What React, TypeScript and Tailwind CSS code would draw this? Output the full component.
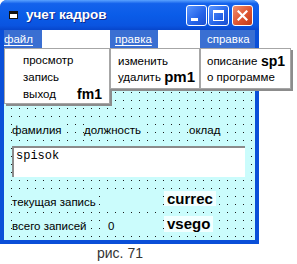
import React from "react";

const FONT = "font-['Liberation_Sans',Arial,sans-serif]";
const CYAN = "bg-[#cbfcfc]";
const GRID =
  "bg-[#cbfcfc] bg-[radial-gradient(circle_at_7.5px_4.5px,#1a1a1a_0.7px,transparent_0.8px)] bg-[length:8px_8px]";

function TitleIcon() {
  return (
    <svg width="9" height="8" viewBox="0 0 9 8" className="shrink-0">
      <rect x="0.5" y="0.5" width="8" height="7" fill="#fff" stroke="#111" />
      <rect x="1" y="1" width="7" height="2" fill="#111" />
    </svg>
  );
}

function CaptionButtons() {
  return (
    <div className="flex items-center gap-[1px]">
      <div className="relative h-[21px] w-[21px] rounded-[3px] border border-white bg-[linear-gradient(135deg,#5a96ff,#2463e8_60%,#1b4fd0)]">
        <div className="absolute bottom-[4px] left-[4px] h-[3px] w-[7px] bg-white" />
      </div>
      <div className="flex h-[21px] w-[21px] items-center justify-center rounded-[3px] border border-white bg-[linear-gradient(135deg,#5a96ff,#2463e8_60%,#1b4fd0)]">
        <div className="h-[11px] w-[11px] border border-t-[3px] border-white" />
      </div>
      <div className="ml-[2px] flex h-[21px] w-[21px] items-center justify-center rounded-[3px] border border-white bg-[linear-gradient(135deg,#f09070,#de5430_55%,#c03a18)]">
        <svg width="11" height="11" viewBox="0 0 11 11">
          <path d="M1.5 1.5 L9.5 9.5 M9.5 1.5 L1.5 9.5" stroke="#fff" strokeWidth="2.2" strokeLinecap="square" />
        </svg>
      </div>
    </div>
  );
}

function Dropdown({ className, children }: { className: string; children: React.ReactNode }) {
  return (
    <div
      className={`absolute top-[48px] border border-[#a6a6a6] bg-white text-[11.5px] text-black shadow-[2px_2px_0_#8c8c8c] ${className}`}
    >
      {children}
    </div>
  );
}

export default function App() {
  return (
    <div className={`relative h-[264px] w-[297px] overflow-hidden bg-white ${FONT}`}>
      <div className="flex w-[259px] flex-col rounded-t-[7px] bg-[#0a4fd8] px-[4px] pb-[4px]">
        {/* title bar */}
        <div className="-mx-[4px] flex h-[30px] items-center rounded-t-[7px] bg-[linear-gradient(#5aa2ff_0%,#1462ec_12%,#0a5ce8_50%,#0a54e0_85%,#0746cc_100%)] pl-[9px] pr-[6px]">
          <TitleIcon />
          <span className="ml-[8px] text-[13.5px] font-bold leading-none text-white [text-shadow:1px_1px_0_#0b2a90]">
            учет кадров
          </span>
          <div className="ml-auto">
            <CaptionButtons />
          </div>
        </div>

        {/* menu bar */}
        <div className="flex h-[18px] bg-white text-[11.5px] leading-[18px] text-white">
          <div className="w-[38px] bg-[#3a6fd2] underline underline-offset-[2px]">файл</div>
          <div className="w-[68px]" />
          <div className="w-[48px] bg-[#3a6fd2] pl-[5px] underline underline-offset-[2px]">правка</div>
          <div className="w-[42px]" />
          <div className="flex-1 bg-[#3a6fd2] pl-[7px]">справка</div>
        </div>

        {/* form canvas */}
        <div className={`flex h-[192px] flex-col pl-[8px] text-[11.5px] text-black ${GRID}`}>
          <div className="mt-[76px] flex h-[13px] leading-[13px]">
            <div className="w-[72px]">
              <span className={CYAN}>фамилия</span>
            </div>
            <div className="w-[105px]">
              <span className={CYAN}>должность</span>
            </div>
            <div>
              <span className={CYAN}>оклад</span>
            </div>
          </div>

          <div className="mt-[9px] h-[31px] w-[233px] border-l-2 border-t-2 border-l-[#8a8a8a] border-t-[#8a8a8a] bg-white pl-[2px] pt-[1px] font-['Liberation_Mono','Courier_New',monospace] text-[12px] leading-[14px]">
            spisok
          </div>

          <div className="mt-[14px] flex h-[17px]">
            <div className="w-[89px]">
              <span className={`mt-[5px] inline-block leading-[13px] ${CYAN}`}>текущая запись</span>
            </div>
            <div className={`h-[17px] w-[59px] ${CYAN}`} />
            <div className="ml-[4px] h-[15px] bg-[#f2ffff] px-[3px] text-[15px] font-bold leading-[15px]">
              currec
            </div>
          </div>

          <div className="mt-[8px] flex h-[17px]">
            <div className="w-[89px]">
              <span className={`mt-[4px] inline-block leading-[13px] ${CYAN}`}>всего записей</span>
            </div>
            <div className={`h-[17px] w-[59px] pl-[7px] pt-[4px] leading-[13px] ${CYAN}`}>0</div>
            <div className="ml-[4px] h-[16px] bg-[#f2ffff] px-[3px] text-[15px] font-bold leading-[16px]">
              vsego
            </div>
          </div>
        </div>
      </div>

      <div className="ml-[97px] mt-[1px] text-[14px] leading-[16px] text-[#333]">рис. 71</div>

      {/* open menus */}
      <Dropdown className="left-[4px] h-[56px] w-[106px] pl-[18px] pr-[7px] pt-[3px]">
        <div className="h-[17px] leading-[17px]">просмотр</div>
        <div className="h-[17px] leading-[17px]">запись</div>
        <div className="flex h-[17px] items-center justify-between leading-[17px]">
          <span>выход</span>
          <span className="text-[14px] font-bold">fm1</span>
        </div>
      </Dropdown>

      <Dropdown className="left-[110px] h-[41px] w-[90px] pl-[7px] pr-[4px] pt-[4px]">
        <div className="h-[16px] leading-[16px]">изменить</div>
        <div className="flex h-[16px] items-center justify-between leading-[16px]">
          <span>удалить</span>
          <span className="text-[15px] font-bold">pm1</span>
        </div>
      </Dropdown>

      <Dropdown className="left-[200px] h-[41px] w-[91px] pl-[6px] pr-[5px] pt-[4px]">
        <div className="flex h-[16px] items-center justify-between leading-[16px]">
          <span>описание</span>
          <span className="text-[14px] font-bold">sp1</span>
        </div>
        <div className="h-[16px] leading-[16px]">о программе</div>
      </Dropdown>
    </div>
  );
}
